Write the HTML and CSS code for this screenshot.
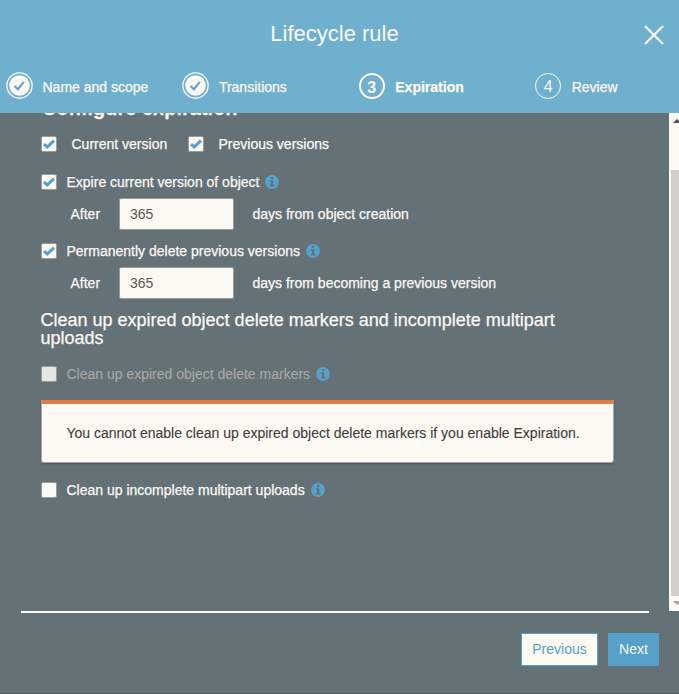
FILE: index.html
```html
<!DOCTYPE html>
<html lang="en">
<head>
<meta charset="utf-8">
<title>Lifecycle rule</title>
<link rel="stylesheet" href="styles.css">
</head>
<body>
<svg class="defs" aria-hidden="true">
  <symbol id="check" viewBox="0 0 14 14"><path d="M2 7.2L5.2 10 12 3.6" fill="none" stroke="#55a1c9" stroke-width="3"/></symbol>
  <symbol id="done" viewBox="0 0 28 28"><circle cx="14.5" cy="13.5" r="12.6" fill="none" stroke="#fcf8f2" stroke-width="1.3"/><circle cx="14.5" cy="13.5" r="10.3" fill="#fcf8f2"/><path d="M9.6 14l3.4 3.2 5.8-7.4" fill="none" stroke="#55a1c9" stroke-width="2"/></symbol>
  <symbol id="info" viewBox="0 0 14 14"><circle cx="7" cy="7" r="6.9" fill="#55a1c9"/><path d="M5.9 2h2.3v2H5.9zM5 5.2h3.2v4.6h1v1.6H5V9.8h1V6.8H5z" fill="#647278"/></symbol>
</svg>
<div class="modal">
  <header class="header">
    <h1>Lifecycle rule</h1>
    <svg class="close" viewBox="0 0 22 22"><path d="M2 2l18 18M20 2L2 20" stroke="#fcf8f2" stroke-width="2.2"/></svg>
    <nav class="steps">
      <div class="step"><svg class="circle"><use href="#done"/></svg><span>Name and scope</span></div>
      <div class="step"><svg class="circle"><use href="#done"/></svg><span>Transitions</span></div>
      <div class="step active"><b class="num">3</b><span>Expiration</span></div>
      <div class="step"><b class="num">4</b><span>Review</span></div>
    </nav>
  </header>
  <main class="body">
    <div class="content">
      <h2>Configure expiration</h2>
      <div class="row versions">
        <i class="box"><svg><use href="#check"/></svg></i><span class="first">Current version</span>
        <i class="box"><svg><use href="#check"/></svg></i><span>Previous versions</span>
      </div>
      <div class="row expire"><i class="box"><svg><use href="#check"/></svg></i><span>Expire current version of object</span><svg class="info"><use href="#info"/></svg></div>
      <div class="after"><span class="label">After</span><input value="365"><span>days from object creation</span></div>
      <div class="row delete"><i class="box"><svg><use href="#check"/></svg></i><span>Permanently delete previous versions</span><svg class="info"><use href="#info"/></svg></div>
      <div class="after"><span class="label">After</span><input value="365"><span>days from becoming a previous version</span></div>
      <h3>Clean up expired object delete markers and incomplete multipart uploads</h3>
      <div class="row markers"><i class="box off"></i><span class="muted">Clean up expired object delete markers</span><svg class="info"><use href="#info"/></svg></div>
      <div class="alert">You cannot enable clean up expired object delete markers if you enable Expiration.</div>
      <div class="row"><i class="box"></i><span>Clean up incomplete multipart uploads</span><svg class="info"><use href="#info"/></svg></div>
    </div>
    <div class="scrollbar">
      <svg class="arrow" viewBox="0 0 10 57"><path d="M4 10l4-4 4 4z" fill="#505050"/></svg>
      <div class="thumb"></div>
      <svg class="arrow-down" viewBox="0 0 10 15"><path d="M4 5h8l-4 4z" fill="#a3a3a3"/></svg>
    </div>
  </main>
  <footer class="footer">
    <div class="buttons"><button class="prev">Previous</button><button class="next">Next</button></div>
  </footer>
</div>
</body>
</html>
```
FILE: styles.css
```css
* { box-sizing: border-box; }
body { margin: 0; font: 14px/20px "Liberation Sans", Arial, sans-serif; color: #fcf8f2; }
.defs { display: none; }
svg { display: block; }
.modal { width: 679px; height: 694px; display: flex; flex-direction: column; background: #647278; border-bottom: 1px solid #52535a; overflow: hidden; }
.header { position: relative; height: 113px; flex: none; background: #6fb0cf; }
h1 { margin: 0; padding: 20px 10px 0 0; font-size: 22px; font-weight: 400; line-height: 28px; text-align: center; }
.close { position: absolute; left: 643px; top: 24px; width: 22px; height: 22px; }
.steps { display: flex; margin: 24px 0 0 5px; }
.step { flex: none; width: 176.4px; height: 28px; display: flex; align-items: center; gap: 9px; -webkit-text-stroke: 0.25px; }
.step:last-child { width: 138px; }
.step span { padding: 1px 0 0 0.5px; }
.circle { width: 28px; height: 28px; }
.num { width: 26px; height: 26px; margin: 0 1px; border: 1px solid #fcf8f2; border-radius: 50%; font-size: 16px; font-weight: 400; line-height: 26px; text-align: center; -webkit-text-stroke: 0; }
.active .num { border-width: 2px; line-height: 25px; }
.active, .active .num { font-weight: 700; }
.body { flex: none; height: 498px; display: flex; overflow: hidden; }
.content { width: 669px; padding-left: 41px; -webkit-text-stroke: 0.25px; }
h2 { margin: -17px 0 0 1px; font-size: 20px; line-height: 24px; }
.row { display: flex; align-items: center; height: 20px; }
.row span, .after span { padding-left: 0.5px; }
.box { flex: none; width: 16px; height: 16px; margin-right: 9px; border: 1px solid #9b9b98; border-radius: 2px; background: #fcf8f2; }
.box svg { width: 14px; height: 14px; }
.box.off { background: #e8e6e1; }
.versions { margin-top: 14px; }
.versions .box { margin-right: 14px; }
.versions .first { width: 117px; }
.expire { margin-top: 18px; }
.info { width: 14px; height: 14px; margin-left: 6px; }
.after { display: flex; align-items: center; height: 32px; margin-top: 6px; }
.label { width: 49px; margin-left: 29px; }
input { width: 115px; height: 32px; margin-right: 18px; padding: 0 10px; border: 1px solid #9b9b98; border-radius: 2px; background: #fcf8f2; color: #595957; font: inherit; -webkit-text-stroke: 0; }
.delete { margin-top: 11px; }
h3 { width: 540px; margin: 12px 0 0 -0.5px; font-size: 18px; font-weight: 400; line-height: 18px; }
.markers { margin-top: 17px; }
.muted { color: #a9a9a6; -webkit-text-stroke: 0.1px; }
.alert { width: 573px; height: 63px; margin: 16px 0 17px; padding: 19px 0 0 24.5px; border: 1px solid #aaa8a4; border-top: 4px solid #de7c48; border-radius: 0 0 3px 3px; background: #fcf8f2; box-shadow: 0 1px 2px rgba(0,0,0,.3); color: #3d3d3d; -webkit-text-stroke: 0.1px; }
.scrollbar { width: 10px; height: 498px; background: #fcf8f2; }
.arrow { width: 10px; height: 57px; }
.thumb { height: 426px; margin-left: 2px; background: #d2cfca; }
.arrow-down { width: 10px; height: 15px; }
.footer { margin: 0 30px 0 21px; border-top: 2px solid #fcf8f2; }
.buttons { display: flex; justify-content: flex-end; gap: 10px; margin: 20px -10px 0 0; }
button { height: 33px; padding: 0 0 2px; border: 1px solid #55a1c9; border-radius: 0; background: #55a1c9; color: #fcf8f2; font: inherit; }
.prev { width: 77px; background: #fcf8f2; color: #55a1c9; }
.next { width: 51px; }
```
